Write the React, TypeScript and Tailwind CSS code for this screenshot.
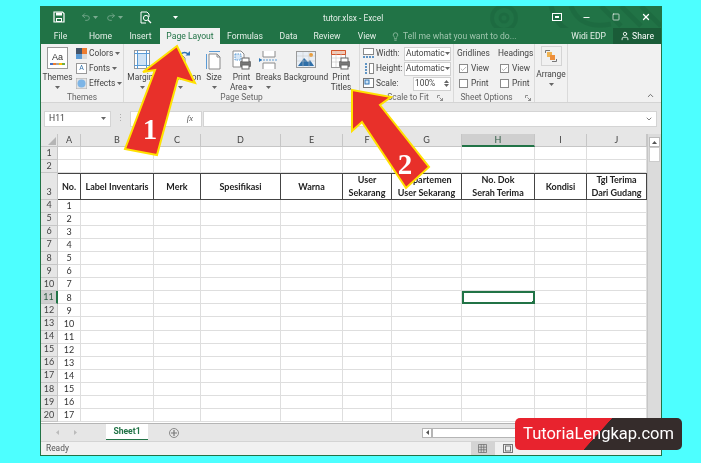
import React from "react";
import { Undo2, Redo2, Lightbulb, User, X, Minus, Square, ChevronUp, ChevronDown, Check } from "lucide-react";

const Caret = ({ c = "#666" }: { c?: string }) => (
  <svg width="5" height="3" viewBox="0 0 5 3" className="inline-block shrink-0"><path d="M0 0h5L2.5 3z" fill={c} /></svg>
);

const Launcher = () => (
  <svg width="6" height="6" viewBox="0 0 6 6" className="shrink-0"><path d="M.5 3V.5H3M2.5 2.5l3 3M5.5 3v2.5H3" fill="none" stroke="#777" strokeWidth=".8" /></svg>
);

const Save = () => (
  <svg width="12" height="12" viewBox="0 0 12 12"><path d="M1 1h8.5L11 2.5V11H1z" fill="none" stroke="#fff" strokeWidth="1.2" /><path d="M3 1.5h6v3H3zM3 7h6v4H3z" fill="#fff" /><path d="M4 8h4v2H4z" fill="#217346" /></svg>
);

const Preview = () => (
  <svg width="13" height="13" viewBox="0 0 13 13"><path d="M2 1h6l2 2v3M2 1v11h5" fill="none" stroke="#fff" /><circle cx="7" cy="7" r="2.6" fill="none" stroke="#fff" /><path d="M9 9l3 3" stroke="#fff" strokeWidth="1.3" /></svg>
);

const IconBig = ({ kind }: { kind: string }) => {
  if (kind === "margins") return (
    <svg width="18" height="20" viewBox="0 0 18 20"><rect x=".5" y=".5" width="15" height="18" fill="#fff" stroke="#9a9a9a" /><rect x="3.5" y="3.5" width="9" height="12" fill="#cfe3f5" /><path d="M3.5 0v19M12.5 0v19M0 3.5h16M0 15.5h16" stroke="#5b9bd5" /></svg>
  );
  if (kind === "orient") return (
    <svg width="22" height="20" viewBox="0 0 22 20"><path d="M3 5h9l3 3v11H3z" fill="#fff" stroke="#8a8a8a" /><path d="M11 4a5 5 0 0 1 7 0" fill="none" stroke="#2f75b5" strokeWidth="1.6" /><path d="M15.5 5.5H20V1z" fill="#2f75b5" /></svg>
  );
  if (kind === "size") return (
    <svg width="18" height="20" viewBox="0 0 18 20"><path d="M4 4h8l3 3v12H4z" fill="#fff" stroke="#8a8a8a" /><path d="M4 1.5h11M1.5 4v15" stroke="#5b9bd5" /><path d="M12 4v3h3" fill="none" stroke="#8a8a8a" /></svg>
  );
  if (kind === "area") return (
    <svg width="20" height="20" viewBox="0 0 20 20"><path d="M1 1h8l3 3v13H1z" fill="#fff" stroke="#8a8a8a" strokeDasharray="0" /><path d="M3 4h6v6H3z" fill="#d6e6f5" stroke="#5b9bd5" strokeDasharray="1.5 1" /><rect x="8" y="11" width="11" height="6" rx="1" fill="#777" /><rect x="10" y="8" width="7" height="4" fill="#fff" stroke="#666" /><rect x="10" y="15" width="7" height="4" fill="#fff" stroke="#666" /></svg>
  );
  if (kind === "breaks") return (
    <svg width="20" height="20" viewBox="0 0 20 20"><path d="M4 1v6h12V1M4 19v-6h12v6" fill="#fff" stroke="#8a8a8a" /><path d="M1 10h18" stroke="#5b9bd5" strokeDasharray="2 1" /><path d="M0 8l3 2-3 2z" fill="#2f75b5" /></svg>
  );
  if (kind === "bg") return (
    <svg width="20" height="20" viewBox="0 0 20 20"><rect x=".5" y="1.5" width="19" height="16" fill="#e8eef5" stroke="#9a9a9a" /><path d="M2 16l6-8 4 4 2-2 4 6z" fill="#2f6fa8" /><circle cx="15" cy="5" r="2" fill="#ed9b33" /><path d="M1 6h18M1 11h18M7 2v15M13 2v15" stroke="#c6c6c6" strokeWidth=".5" /></svg>
  );
  return (
    <svg width="20" height="20" viewBox="0 0 20 20"><rect x=".5" y=".5" width="14" height="17" fill="#fff" stroke="#9a9a9a" /><path d="M.5 .5h14v4H.5z" fill="#f3c9b5" stroke="#d4552a" /><path d="M5 1v16M10 1v16M1 8h13M1 12h13" stroke="#c6c6c6" strokeWidth=".6" /><rect x="8" y="11" width="11" height="6" rx="1" fill="#777" /><rect x="10" y="8" width="7" height="4" fill="#fff" stroke="#666" /><rect x="10" y="15" width="7" height="4" fill="#fff" stroke="#666" /></svg>
  );
};

const PageBtn = ({ w, icon, l1, l2, caret2, caret1 }: { w: string; icon: string; l1: string; l2?: string; caret2?: boolean; caret1?: boolean }) => (
  <div className={`${w} flex flex-col items-center pt-[4px] leading-[10px]`}>
    <div className="h-[24px] flex items-center"><IconBig kind={icon} /></div>
    <span className="whitespace-nowrap">{l1}</span>
    {l2 ? <span className="whitespace-nowrap flex items-center gap-[1px]">{l2}{caret1 && <Caret />}</span> : null}
    {caret2 && <span className="h-[10px] flex items-center"><Caret /></span>}
  </div>
);

const SmallRow = ({ swatch, label }: { swatch: React.ReactNode; label: string }) => (
  <div className="h-[15px] flex items-center gap-[2px]">{swatch}<span>{label}</span><Caret /></div>
);

const Dropdown = () => (
  <div className="w-[47px] h-[14px] bg-white border border-[#d0d0d0] flex items-center justify-between px-[1px] pr-[3px]"><span>Automatic</span><Caret /></div>
);

const CheckRow = ({ on, label }: { on?: boolean; label: string }) => (
  <div className="h-[15px] flex items-center gap-[3px] pl-[2px]">
    <span className="w-[9px] h-[9px] bg-white border border-[#8a8a8a] flex items-center justify-center">{on && <Check size={8} strokeWidth={1.5} color="#555" />}</span>
    <span>{label}</span>
  </div>
);

const cols = ["A", "B", "C", "D", "E", "F", "G", "H", "I", "J"];
const heads: Record<string, string[]> = {
  A: ["No."], B: ["Label Inventaris"], C: ["Merk"], D: ["Spesifikasi"], E: ["Warna"],
  F: ["User", "Sekarang"], G: ["Departemen", "User Sekarang"], H: ["No. Dok", "Serah Terima"], I: ["Kondisi"], J: ["Tgl Terima", "Dari Gudang"],
};

const Sheet = () => {
  const rows = Array.from({ length: 20 }, (_, i) => i + 1);
  return (
    <div className="grid grid-cols-[17px_23px_73px_47px_80px_62px_49px_70px_73px_52px_60px] grid-rows-[13.3px_13px_13px_26.3px_repeat(17,13.1px)] bg-white font-['Lato',sans-serif] text-[9px] text-[#333]">
      <div className="bg-[#e6e6e6] border-r border-b border-[#c6c6c6] flex items-end justify-end p-[1px]">
        <svg width="8" height="8" viewBox="0 0 8 8"><path d="M8 0v8H0z" fill="#b5b5b5" /></svg>
      </div>
      {cols.map((c) => (
        <div key={c} className={c === "H" ? "bg-[#cfcfcf] border-b-2 border-b-[#217346] border-r border-r-[#c6c6c6] flex items-center justify-center text-[#2f5c45]" : "bg-[#e6e6e6] border-r border-b border-[#c6c6c6] flex items-center justify-center text-[#444]"}>{c}</div>
      ))}
      {rows.map((r) => (
        <React.Fragment key={r}>
          <div className={r === 11 ? "bg-[#cfcfcf] border-r-2 border-r-[#217346] border-b border-b-[#c6c6c6] flex items-end justify-center text-[#2f5c45]" : "bg-[#e6e6e6] border-r border-b border-[#c6c6c6] flex items-end justify-center text-[#444]"}>{r}</div>
          {cols.map((c) => {
            if (r === 3) {
              return (
                <div key={c} className="border-y border-r border-[#444] flex flex-col items-center justify-center font-bold leading-[13px] text-[#222] whitespace-nowrap">
                  {heads[c].map((t) => <span key={t}>{t}</span>)}
                </div>
              );
            }
            const selected = r === 11 && c === "H";
            return (
              <div key={c} className={selected ? "relative border-2 border-[#217346]" : "border-r border-b border-[#dedede] flex items-center justify-center"}>
                {c === "A" && r > 3 ? r - 3 : null}
                {selected && <span className="absolute -right-[2px] -bottom-[2px] w-[3px] h-[3px] bg-[#217346]" />}
              </div>
            );
          })}
        </React.Fragment>
      ))}
    </div>
  );
};

export default function App() {
  return (
    <div className="relative w-[701px] h-[463px] bg-[#4dffff] pt-[6px] pl-[40px] overflow-hidden font-['Roboto',sans-serif] text-[8.4px] text-[#444] blur-[0.35px]">
      <div className="relative w-[622px] h-[450px] border border-[#217346] border-t-0 bg-[#e6e6e6] flex flex-col">
        {/* title bar */}
        <div className="relative h-[22px] bg-[#217346] text-white flex items-center overflow-hidden">
          <svg width="180" height="38" viewBox="0 0 180 38" className="absolute right-0 top-0 opacity-30">
            <circle cx="23" cy="12" r="12" fill="none" stroke="#175c36" strokeWidth="4" />
            <circle cx="23" cy="12" r="4" fill="none" stroke="#175c36" strokeWidth="3" />
            <path d="M70 0c6 26 28 34 60 30M90 0c6 16 20 22 40 18M120 0l20 20M140 0l20 20M160 0l20 20" fill="none" stroke="#175c36" strokeWidth="5" />
            <path d="M-40 0v22M-30 0v18M-20 0v22" stroke="#175c36" strokeWidth="3" />
          </svg>
          <div className="w-[12px]" />
          <Save />
          <div className="ml-[16px] flex items-center gap-[2px] opacity-40"><Undo2 size={10} /><Caret c="#fff" /></div>
          <div className="ml-[8px] flex items-center gap-[2px] opacity-40"><Redo2 size={10} /><Caret c="#fff" /></div>
          <div className="ml-[16px]"><Preview /></div>
          <div className="ml-[21px]"><Caret c="#fff" /></div>
          <div className="ml-[145px] mt-[3px] text-[#e4efe8] whitespace-nowrap">tutor.xlsx - Excel</div>
          <div className="ml-auto flex items-center relative">
            <span className="w-[28px] flex justify-center"><svg width="10" height="8" viewBox="0 0 10 8"><rect x=".5" y=".5" width="9" height="7" fill="none" stroke="#fff" /><path d="M3 4h4" stroke="#fff" strokeWidth="2" /></svg></span>
            <span className="w-[30px] flex justify-center"><Minus size={9} strokeWidth={2.5} /></span>
            <span className="w-[30px] flex justify-center"><Square size={8} strokeWidth={2} /></span>
            <span className="w-[30px] flex justify-center"><X size={10} strokeWidth={3} /></span>
          </div>
        </div>
        {/* tabs */}
        <div className="h-[16px] bg-[#217346] flex items-stretch text-[#e4efe8] text-[8.6px]">
          <div className="w-[39px] flex items-center justify-center">File</div>
          <div className="w-[41px] flex items-center justify-center">Home</div>
          <div className="w-[39px] flex items-center justify-center">Insert</div>
          <div className="w-[60px] flex items-center justify-center bg-[#f1f1f1] text-[#217346]">Page Layout</div>
          <div className="w-[50px] flex items-center justify-center">Formulas</div>
          <div className="w-[37px] flex items-center justify-center">Data</div>
          <div className="w-[40px] flex items-center justify-center">Review</div>
          <div className="w-[40px] flex items-center justify-center">View</div>
          <div className="ml-[4px] flex items-center gap-[3px] text-[#9fc6ae]"><Lightbulb size={9} /><span className="whitespace-nowrap">Tell me what you want to do...</span></div>
          <div className="ml-auto flex items-center pr-[7px] text-[#e4efe8]">Widi EDP</div>
          <div className="w-[48px] bg-[#1a5c38] flex items-center justify-center gap-[2px] text-white"><User size={10} />Share</div>
        </div>
        {/* ribbon */}
        <div className="h-[59px] bg-[#f1f1f1] border-b border-[#d4d4d4] flex relative">
          {/* Themes */}
          <div className="w-[83px] border-r border-[#dadada] flex flex-col">
            <div className="flex h-[50px]">
              <div className="w-[33px] flex flex-col items-center pt-[3px] leading-[10px]">
                <div className="w-[21px] h-[22px] border border-[#999] bg-white flex flex-col items-center justify-center mb-[3px]">
                  <span className="text-[9px] leading-[12px] text-[#333] font-['Liberation_Sans',sans-serif]">Aa</span>
                  <span className="flex"><i className="w-[3px] h-[2px] bg-[#4472c4]" /><i className="w-[3px] h-[2px] bg-[#ed7d31]" /><i className="w-[3px] h-[2px] bg-[#a5a5a5]" /><i className="w-[3px] h-[2px] bg-[#ffc000]" /><i className="w-[3px] h-[2px] bg-[#70ad47]" /></span>
                </div>
                <span>Themes</span>
                <span className="h-[10px] flex items-center"><Caret /></span>
              </div>
              <div className="pl-[2px] pt-[2px]">
                <SmallRow label="Colors" swatch={<svg width="11" height="11" viewBox="0 0 11 11"><path d="M0 0h6v6H0z" fill="#44546a" /><path d="M6 0h5v6H6z" fill="#ed7d31" /><path d="M0 6h6v5H0z" fill="#5b9bd5" /><path d="M6 6h5v5H6z" fill="#d9d9d9" /></svg>} />
                <SmallRow label="Fonts" swatch={<span className="w-[11px] h-[11px] bg-white border border-[#999] flex items-center justify-center text-[7px] leading-none text-[#2f6fa8]">A</span>} />
                <SmallRow label="Effects" swatch={<svg width="11" height="11" viewBox="0 0 11 11"><rect width="11" height="11" fill="#e3e3e3" stroke="#aaa" /><circle cx="5.5" cy="5.5" r="4" fill="#7db5e6" /></svg>} />
              </div>
            </div>
            <div className="text-center leading-[9px] text-[#666]">Themes</div>
          </div>
          {/* Page setup */}
          <div className="w-[236px] border-r border-[#dadada] flex flex-col">
            <div className="flex h-[50px]">
              <PageBtn w="w-[37px]" icon="margins" l1="Margins" caret2 />
              <PageBtn w="w-[39px]" icon="orient" l1="Orientation" caret2 />
              <PageBtn w="w-[28px]" icon="size" l1="Size" caret2 />
              <PageBtn w="w-[27px]" icon="area" l1="Print" l2="Area" caret1 />
              <PageBtn w="w-[27px]" icon="breaks" l1="Breaks" caret2 />
              <PageBtn w="w-[48px]" icon="bg" l1="Background" />
              <PageBtn w="w-[22px]" icon="titles" l1="Print" l2="Titles" />
            </div>
            <div className="flex items-center justify-center leading-[9px] text-[#666] relative">Page Setup</div>
          </div>
          {/* Scale */}
          <div className="w-[94px] border-r border-[#dadada] flex flex-col pl-[3px]">
            <div className="h-[50px] pt-[2px]">
              <div className="h-[15px] flex items-center"><svg width="12" height="11" viewBox="0 0 12 11" className="mr-[1px]"><rect x=".5" y=".5" width="10" height="6" fill="#fff" stroke="#888" /><path d="M0 9h11" stroke="#2f75b5" strokeDasharray="2 1" strokeWidth="1.5" /></svg><span className="w-[28px]">Width:</span><Dropdown /></div>
              <div className="h-[15px] flex items-center"><svg width="12" height="11" viewBox="0 0 12 11" className="mr-[1px]"><rect x="6.5" y=".5" width="4" height="10" fill="#fff" stroke="#888" /><path d="M3 0v11" stroke="#2f75b5" strokeDasharray="2 1" strokeWidth="1.5" /></svg><span className="w-[28px]">Height:</span><Dropdown /></div>
              <div className="h-[15px] flex items-center"><svg width="12" height="11" viewBox="0 0 12 11" className="mr-[1px]"><rect x=".5" y=".5" width="10" height="9" fill="#fff" stroke="#777" /><rect x="2" y="2" width="4" height="4" fill="#cfe3f5" stroke="#2f75b5" /></svg><span className="w-[37px]">Scale:</span>
                <div className="w-[38px] h-[14px] bg-white border border-[#d0d0d0] flex items-center justify-between px-[1px]"><span>100%</span><span className="flex flex-col items-center gap-[1px]"><svg width="5" height="3" viewBox="0 0 5 3"><path d="M0 3h5L2.5 0z" fill="#666" /></svg><Caret /></span></div>
              </div>
            </div>
            <div className="flex items-center justify-center gap-[8px] pl-[14px] leading-[9px] text-[#666]"><span>Scale to Fit</span><Launcher /></div>
          </div>
          {/* Sheet options */}
          <div className="w-[81px] border-r border-[#dadada] flex flex-col pl-[3px]">
            <div className="flex h-[50px] pt-[2px]">
              <div className="w-[41px]">
                <div className="h-[15px] flex items-center">Gridlines</div>
                <CheckRow on label="View" />
                <CheckRow label="Print" />
              </div>
              <div>
                <div className="h-[15px] flex items-center">Headings</div>
                <CheckRow on label="View" />
                <CheckRow label="Print" />
              </div>
            </div>
            <div className="flex items-center justify-center gap-[12px] leading-[9px] text-[#666]"><span>Sheet Options</span><Launcher /></div>
          </div>
          {/* Arrange */}
          <div className="w-[33px] border-r border-[#dadada] flex flex-col items-center pt-[2px]">
            <div className="w-[21px] h-[20px] border border-[#d4d4d4] flex items-center justify-center"><svg width="12" height="12" viewBox="0 0 12 12"><path d="M.5 3V.5H5M11.5 9v2.5H7" fill="none" stroke="#777" /><rect x="2" y="2" width="5" height="5" fill="#f0b453" /><rect x="5" y="5" width="5" height="5" fill="#ed8f3c" /></svg></div>
            <span className="mt-[3px] leading-[10px]">Arrange</span>
            <span className="h-[10px] flex items-center"><Caret /></span>
          </div>
          <div className="flex-1 flex items-end justify-end pr-[6px] pb-[2px]"><ChevronUp size={9} strokeWidth={2.5} color="#666" /></div>
        </div>
        {/* formula bar */}
        <div className="h-[31px] flex items-center pl-[3px] pr-[4px] bg-[#e6e6e6] text-[8.6px]">
          <div className="w-[67px] h-[16px] bg-white border border-[#d4d4d4] flex items-center justify-between px-[4px]"><span>H11</span><Caret /></div>
          <div className="w-[19px] flex justify-center text-[#aaa]">⋮</div>
          <div className="w-[72px] h-[16px] bg-white border border-[#d4d4d4] flex items-center justify-end pr-[8px] italic font-['Liberation_Serif',serif] text-[#555]">fx</div>
          <div className="ml-[1px] flex-1 h-[16px] bg-white border border-[#d4d4d4] flex items-center justify-end pr-[3px]"><ChevronDown size={8} strokeWidth={2.5} color="#666" /></div>
        </div>
        {/* sheet */}
        <div className="flex h-[289px]">
          <Sheet />
          <div className="w-[14px] bg-[#dbdbdb] flex flex-col items-center pt-[3px] border-l border-[#c6c6c6]">
            <div className="w-[11px] h-[10px] bg-white border border-[#bbb] flex items-center justify-center"><svg width="5" height="3" viewBox="0 0 5 3"><path d="M0 3h5L2.5 0z" fill="#555" /></svg></div>
            <div className="w-[11px] h-[15px] bg-white border border-[#ccc]" />
          </div>
        </div>
        {/* sheet tabs */}
        <div className="h-[18px] border-t border-[#b5b5b5] bg-[#e6e6e6] flex items-start">
          <div className="w-[65px] h-full flex items-center gap-[15px] pl-[15px]">
            <svg width="3" height="5" viewBox="0 0 3 5"><path d="M3 0v5L0 2.5z" fill="#bbb" /></svg>
            <svg width="3" height="5" viewBox="0 0 3 5"><path d="M0 0v5l3-2.5z" fill="#bbb" /></svg>
          </div>
          <div className="w-[42px] h-[16px] bg-white border-b border-b-[#217346] flex items-center justify-center font-bold text-[8.6px] text-[#217346]">Sheet1</div>
          <div className="ml-[21px] h-full flex items-center">
            <span className="w-[10px] h-[10px] rounded-full border border-[#8a8a8a] flex items-center justify-center">
              <svg width="6" height="6" viewBox="0 0 6 6"><path d="M3 0v6M0 3h6" stroke="#777" strokeWidth="1.2" /></svg>
            </span>
          </div>
          <div className="ml-[243px] h-full flex items-center">
            <span className="w-[10px] h-[10px] bg-white border border-[#b5b5b5] flex items-center justify-center"><svg width="3" height="5" viewBox="0 0 3 5"><path d="M3 0v5L0 2.5z" fill="#555" /></svg></span>
            <span className="w-[120px] h-[10px] bg-white border border-[#b5b5b5]" />
          </div>
        </div>
        {/* status */}
        <div className="flex-1 bg-[#f1f1f1] border-t border-[#d4d4d4] flex items-center pl-[5px] text-[#555]">
          <span>Ready</span>
          <div className="ml-[402px] w-[24px] h-full bg-[#d4d4d4] flex items-center justify-center">
            <svg width="9" height="9" viewBox="0 0 9 9"><path d="M.5.5h8v8h-8zM3.2.5v8M5.8.5v8M.5 3.2h8M.5 5.8h8" fill="none" stroke="#666" strokeWidth=".7" /></svg>
          </div>
          <div className="ml-[8px]"><svg width="10" height="9" viewBox="0 0 10 9"><rect x=".5" y=".5" width="9" height="8" fill="none" stroke="#777" /><rect x="2.5" y="2" width="5" height="5" fill="none" stroke="#777" /></svg></div>
        </div>
      </div>

      {/* tutorial arrows */}
      <svg width="701" height="463" viewBox="0 0 701 463" className="absolute left-0 top-0 pointer-events-none">
        <path d="M177 46 L195 83 L178 78 L157 155 L125 149 L155 70 L143 72 Z" fill="#e8302a" stroke="#ffe100" strokeWidth="2" strokeLinejoin="miter" />
        <path d="M352 90 L391 97 L380 105 L429 167 L406 188 L362 122 L352 131 Z" fill="#e8302a" stroke="#ffe100" strokeWidth="2" strokeLinejoin="miter" />
        <text x="150" y="139" textAnchor="middle" fill="#fff" fontSize="29" fontWeight="700" fontFamily="'Liberation Serif',serif">1</text>
        <text x="405" y="174" textAnchor="middle" fill="#fff" fontSize="29" fontWeight="700" fontFamily="'Liberation Serif',serif">2</text>
      </svg>

      {/* watermark */}
      <div className="absolute left-[515px] top-[418px] w-[167px] h-[32px] rounded-[5px] overflow-hidden bg-[linear-gradient(132deg,#e8232e_72px,#352c2b_72.5px)] flex items-center justify-center font-['Roboto',sans-serif] text-[16.5px] text-white whitespace-nowrap">
        TutoriaLengkap.com
      </div>
    </div>
  );
}
